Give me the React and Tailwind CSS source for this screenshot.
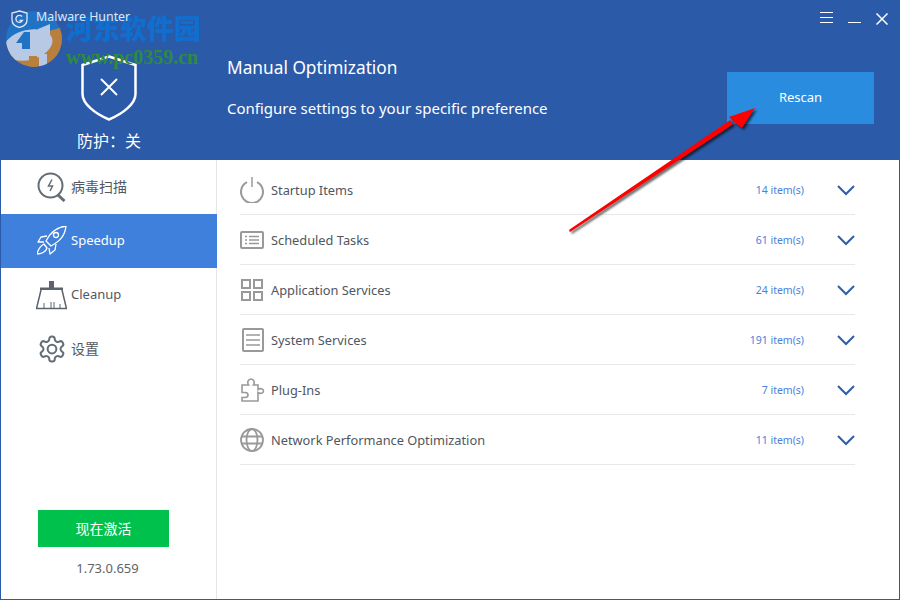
import React from 'react'

const Power = () => (
  <svg width="24" height="26" viewBox="0 0 24 26" fill="none" stroke="#9a9a9a" strokeWidth="2">
    <path d="M7 5.200a11 11 0 1 0 10 0" />
    <path d="M12 0v10" strokeWidth="1.500" />
  </svg>
)

const Tasks = () => (
  <svg width="24" height="18" viewBox="0 0 24 18" fill="none" stroke="#999" strokeWidth="2">
    <rect x="1" y="1" width="22" height="16" rx="1" />
    <path d="M5 5.500h2M5 9h2M5 12.500h2M9 5.500h10M9 9h10M9 12.500h10" strokeWidth="1.500" />
  </svg>
)

const Grid = () => (
  <svg className="ml-[1px]" width="22" height="22" viewBox="0 0 22 22" fill="none" stroke="#999" strokeWidth="2">
    <rect x="1" y="1" width="8" height="8" />
    <rect x="13" y="1" width="8" height="8" />
    <rect x="1" y="13" width="8" height="8" />
    <rect x="13" y="13" width="8" height="8" />
  </svg>
)

const Lines = () => (
  <svg className="ml-[2px]" width="22" height="24" viewBox="0 0 22 24" fill="none" stroke="#999" strokeWidth="2">
    <rect x="1" y="1" width="20" height="22" rx="1" />
    <path d="M4 7h14M4 12h14M4 17h14" strokeWidth="1.500" />
  </svg>
)

const Puzzle = () => (
  <svg className="ml-[1px]" width="24" height="24" viewBox="0 0 24 24" fill="none" stroke="#999" strokeWidth="1.600">
    <path d="M1 7h6.500C6 4.500 7 1 10 1s4 3.500 2.500 6H17v4.500c2-1.500 5.500-1 5.500 1.500s-3.500 3-5.500 1.500V23H1v-3.500h3c2 0 3-1 3-2.500s-1-2.500-3-2.500H1V7z" />
  </svg>
)

const Globe = () => (
  <svg width="24" height="24" viewBox="0 0 24 24" fill="none" stroke="#999" strokeWidth="1.800">
    <circle cx="12" cy="12" r="11" />
    <ellipse cx="12" cy="12" rx="5.500" ry="11" />
    <path d="M2 8.500h20M2 15.500h20" />
  </svg>
)

const rows = [
  { name: 'Startup Items', count: '14 item(s)', icon: <Power /> },
  { name: 'Scheduled Tasks', count: '61 item(s)', icon: <Tasks /> },
  { name: 'Application Services', count: '24 item(s)', icon: <Grid /> },
  { name: 'System Services', count: '191 item(s)', icon: <Lines /> },
  { name: 'Plug-Ins', count: '7 item(s)', icon: <Puzzle /> },
  { name: 'Network Performance Optimization', count: '11 item(s)', icon: <Globe /> },
]

const ScanIcon = () => (
  <svg width="30" height="30" viewBox="0 0 30 30" fill="none" stroke="#656d75" strokeWidth="2">
    <circle cx="13.500" cy="13.500" r="12" />
    <path d="M20.500 22.500l7 6.500" strokeWidth="3" />
    <path d="M15 7.500l-3.500 6.500h4l-2.500 5" strokeWidth="1.500" />
  </svg>
)

const RocketIcon = () => (
  <svg width="30" height="30" viewBox="0 0 30 30" fill="none" stroke="#fff" strokeWidth="1.300" strokeLinejoin="round">
    <path d="M29 0C20 1 14 5 9 15l5 5c9-5 14-10 15-20z" />
    <circle cx="19" cy="9" r="2.500" />
    <path d="M10 10l-6 1-3 5h6M19 18l-1 6-5 4-1-6" />
    <path d="M7 18c-4 2-6 6-7 10 4 0 9-2 10-6z" />
  </svg>
)

const BroomIcon = () => (
  <svg width="31" height="29" viewBox="0 0 31 29" fill="none" stroke="#5c636b" strokeWidth="1.500">
    <path d="M13 0h5v7h-5z" fill="#5c636b" stroke="none" />
    <path d="M4 6.500h23V9H4z" fill="#5c636b" stroke="none" />
    <path d="M5 9L.5 27.500h30L26 9" />
    <path d="M8 27v-5M15 27v-6M18 27v-6M24 27v-4" strokeWidth="1" />
  </svg>
)

const GearIcon = () => (
  <svg width="30" height="30" viewBox="0 0 24 24" fill="none" stroke="#656d75" strokeWidth="1.600" strokeLinecap="round" strokeLinejoin="round">
    <path d="M12.220 2h-.44a2 2 0 0 0-2 2v.180a2 2 0 0 1-1 1.730l-.430.250a2 2 0 0 1-2 0l-.150-.080a2 2 0 0 0-2.730.730l-.220.380a2 2 0 0 0 .730 2.730l.150.100a2 2 0 0 1 1 1.720v.510a2 2 0 0 1-1 1.740l-.150.090a2 2 0 0 0-.730 2.730l.220.380a2 2 0 0 0 2.730.730l.150-.080a2 2 0 0 1 2 0l.430.250a2 2 0 0 1 1 1.730V20a2 2 0 0 0 2 2h.440a2 2 0 0 0 2-2v-.180a2 2 0 0 1 1-1.730l.430-.250a2 2 0 0 1 2 0l.150.080a2 2 0 0 0 2.730-.730l.220-.390a2 2 0 0 0-.730-2.730l-.150-.080a2 2 0 0 1-1-1.740v-.500a2 2 0 0 1 1-1.740l.150-.090a2 2 0 0 0 .730-2.730l-.220-.380a2 2 0 0 0-2.730-.730l-.150.080a2 2 0 0 1-2 0l-.430-.250a2 2 0 0 1-1-1.730V4a2 2 0 0 0-2-2z" />
    <circle cx="12" cy="12" r="3.500" />
  </svg>
)

const nav = [
  { name: '病毒扫描', icon: <ScanIcon /> },
  { name: 'Speedup', icon: <RocketIcon />, active: true, latin: true },
  { name: 'Cleanup', icon: <BroomIcon />, latin: true },
  { name: '设置', icon: <GearIcon /> },
]

const App = () => {
  return (
    <div className="relative w-[900px] h-[600px] flex flex-col overflow-hidden bg-white border border-[#2b5aa8] font-['Noto_Sans','Noto_Sans_CJK_SC',sans-serif]">
      <header className="h-[159px] shrink-0 flex bg-[#2b5aa8] text-white">
        <div className="w-[216px] shrink-0 flex flex-col">
          <div className="relative z-10 h-[36px] flex items-center gap-[8px] pl-[10px]">
            <svg width="17" height="18" viewBox="0 0 17 18" fill="none" stroke="#dfe7f5" strokeWidth="1.300">
              <path d="M8.500 1L16 3v7c0 4-3.500 6.500-7.500 7.500C4.500 16.500 1 14 1 10V3z" />
              <path d="M11 6.500a3.500 3.500 0 1 0 .5 4H8.500" />
            </svg>
            <span className="text-[12.400px] text-[#dfe7f5] mt-[-3px]">Malware Hunter</span>
          </div>
          <div className="flex justify-center mt-[18px]">
            <svg width="56" height="66" viewBox="0 0 56 66" fill="none" stroke="#fff" strokeWidth="2.500">
              <path d="M28 1.500L54.500 10v29c0 10-13 20-26.500 25.500C14.500 59 1.500 49 1.500 39V10z" />
              <path d="M20 24l16 16M36 24L20 40" strokeWidth="2" />
            </svg>
          </div>
          <div className="mt-[8px] text-center text-base leading-[24px]">防护：关</div>
        </div>
        <div className="flex-1 flex items-start pl-[10px]">
          <div className="flex-1 pt-[54px]">
            <div className="text-[17.300px] leading-[26px]">Manual Optimization</div>
            <div className="mt-[16px] text-[15px] leading-[23px]">Configure settings to your specific preference</div>
          </div>
          <div className="flex flex-col items-end pr-[25px]">
            <div className="h-[71px] pt-[2px] flex items-start gap-[15px] mr-[-14px]">
              <div className="flex flex-col gap-[4px] mt-[9px]">
                <span className="block w-[13px] h-px bg-white" />
                <span className="block w-[13px] h-px bg-white" />
                <span className="block w-[13px] h-px bg-white" />
              </div>
              <span className="block w-[13px] h-px bg-white mt-[19px]" />
              <svg className="mt-[10px]" width="12" height="12" viewBox="0 0 12 12" stroke="#fff" strokeWidth="1.500">
                <path d="M.5.500l11 11M11.500.500l-11 11" />
              </svg>
            </div>
            <button className="w-[147px] h-[52px] bg-[#2a8cdf] text-white text-[13px]">Rescan</button>
          </div>
        </div>
      </header>

      <div className="flex-1 flex min-h-0">
        <aside className="w-[216px] shrink-0 flex flex-col border-r border-[#e6e6e6]">
          {nav.map((item) => (
            <div
              key={item.name}
              className={`h-[54px] flex items-center gap-[4px] pl-[35px] ${item.active ? 'bg-[#3f80dd] text-white mr-[-1px]' : 'text-[#55595f]'}`}
            >
              <span className="w-[31px] flex justify-center">{item.icon}</span>
              <span className={item.latin ? 'text-[13px]' : 'text-sm'}>{item.name}</span>
            </div>
          ))}
          <div className="mt-auto flex flex-col pb-[22px]">
            <button className="ml-[37px] w-[131px] h-[37px] bg-[#00c14c] text-white text-sm">现在激活</button>
            <div className="mt-[12px] text-center text-[13px] leading-[18px] text-[#5f6368] pr-[2px]">1.73.0.659</div>
          </div>
        </aside>

        <main className="flex-1 pt-[5px] pl-[23px] pr-[44px]">
          {rows.map((r) => (
            <div key={r.name} className="h-[50px] flex items-center border-b border-[#e8e8e8]">
              <span className="w-[26px] flex justify-start">{r.icon}</span>
              <span className="ml-[5px] mt-[2px] flex-1 text-[12.800px] text-[#4f5660]">{r.name}</span>
              <span className="mt-[2px] text-[10.500px] text-[#4a80dc]">{r.count}</span>
              <svg className="mt-[2px] ml-[33px]" width="18" height="11" viewBox="0 0 18 11" fill="none" stroke="#2f5ea8" strokeWidth="2">
                <path d="M1 1l8 8 8-8" />
              </svg>
            </div>
          ))}
        </main>
      </div>

      {/* watermark stamped over the screenshot */}
      <svg className="absolute left-0 top-[4px]" width="70" height="65" viewBox="0 0 70 65">
        <defs>
          <clipPath id="wm">
            <circle cx="33" cy="34" r="28" />
          </clipPath>
        </defs>
        <g clipPath="url(#wm)">
          <rect width="70" height="65" fill="#1f72c4" />
          <path d="M0 40L62 22v43H0z" fill="#b97f3c" />
          <ellipse cx="27" cy="40" rx="25" ry="15" transform="rotate(-15 27 40)" fill="#b8c9e6" />
          <path d="M15 38l8-11h6v17h-8v-6z" fill="#1f72c4" />
          <path d="M37 24l12-5v22l-12 3z" fill="#b8c9e6" />
          <path d="M28 51h8v14h-8z" fill="#b97f3c" />
          <path d="M38 49h8v12h-8z" fill="#b8c9e6" />
        </g>
      </svg>
      <div className="absolute left-[65px] top-[9px] text-[27px] leading-[36px] font-black text-[#0f6fd0] font-['Noto_Sans_CJK_SC',serif]">河东软件园</div>
      <div className="absolute left-[65px] top-[46px] text-[20px] leading-[20px] font-bold text-[#2e8b3f] font-['Liberation_Serif',serif]">www.pc0359.cn</div>

      <svg className="absolute left-[560px] top-[100px] drop-shadow-[2px_2px_1px_rgba(0,0,0,0.6)]" width="200" height="140" viewBox="0 0 200 140">
        <path d="M9 130L171 23l-2-3L9 129z" fill="#f00" stroke="#f00" strokeWidth="1.500" strokeLinejoin="round" />
        <path d="M194 7l-26 9 6 6 7 5z" fill="#f00" />
      </svg>
    </div>
  )
}

export default App
